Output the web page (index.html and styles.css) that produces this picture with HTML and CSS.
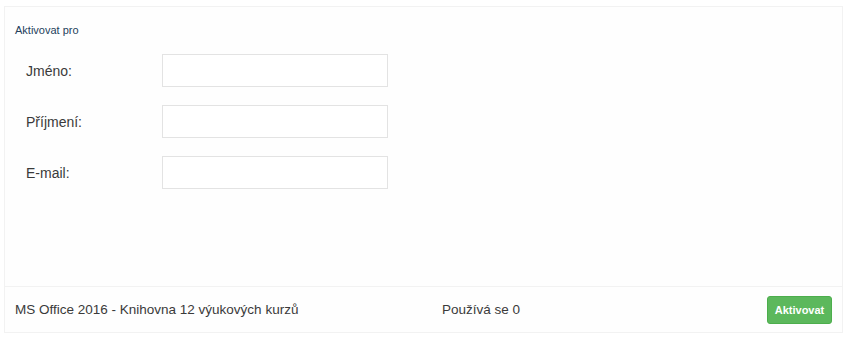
FILE: index.html
```html
<!DOCTYPE html>
<html lang="cs">
<head>
<meta charset="utf-8">
<link rel="stylesheet" href="styles.css">
</head>
<body>
<div class="panel">
  <div class="panel-body">
    <div class="section-title">Aktivovat pro</div>
    <div class="form">
      <div class="row"><label class="label">Jméno:</label><input class="input" type="text"></div>
      <div class="row"><label class="label">Příjmení:</label><input class="input" type="text"></div>
      <div class="row"><label class="label">E-mail:</label><input class="input" type="text"></div>
    </div>
  </div>
  <div class="panel-footer">
    <div class="product">MS Office 2016 - Knihovna 12 výukových kurzů</div>
    <div class="usage">Používá se 0</div>
    <button class="btn" type="button">Aktivovat</button>
  </div>
</div>
</body>
</html>
```
FILE: styles.css
```css
html, body {
  margin: 0;
  padding: 0;
  background: #ffffff;
}
body {
  font-family: "Liberation Sans", Arial, sans-serif;
  color: #3a3a3a;
}
.panel {
  margin: 6px 7px 0 4px;
  border: 1px solid #f2f2f2;
  height: 327px;
  box-sizing: border-box;
  display: flex;
  flex-direction: column;
  background: #fefefe;
}
.panel-body {
  flex: 1;
  padding: 17px 10px 0 10px;
}
.section-title {
  font-size: 11px;
  color: #243f5c;
  line-height: 13px;
}
.form {
  margin-top: 17px;
  display: flex;
  flex-direction: column;
  gap: 18px;
}
.row {
  display: flex;
  align-items: center;
  padding-left: 11px;
}
.label {
  width: 136px;
  font-size: 14px;
}
.input {
  width: 226px;
  height: 33px;
  box-sizing: border-box;
  border: 1px solid #e3e3e3;
  background: #fff;
  margin: 0;
  padding: 0 6px;
}
.panel-footer {
  height: 45px;
  border-top: 1px solid #f2f2f2;
  display: flex;
  align-items: center;
  padding: 0 10px;
  font-size: 13.5px;
}
.product {
  width: 427px;
}
.usage {
  flex: 1;
}
.btn {
  background: #5cb85c;
  border: 1px solid #4cae4c;
  border-radius: 3px;
  color: #ffffff;
  font-family: "Liberation Sans", Arial, sans-serif;
  font-size: 11px;
  font-weight: bold;
  height: 28px;
  width: 65px;
  padding: 0;
}
```
